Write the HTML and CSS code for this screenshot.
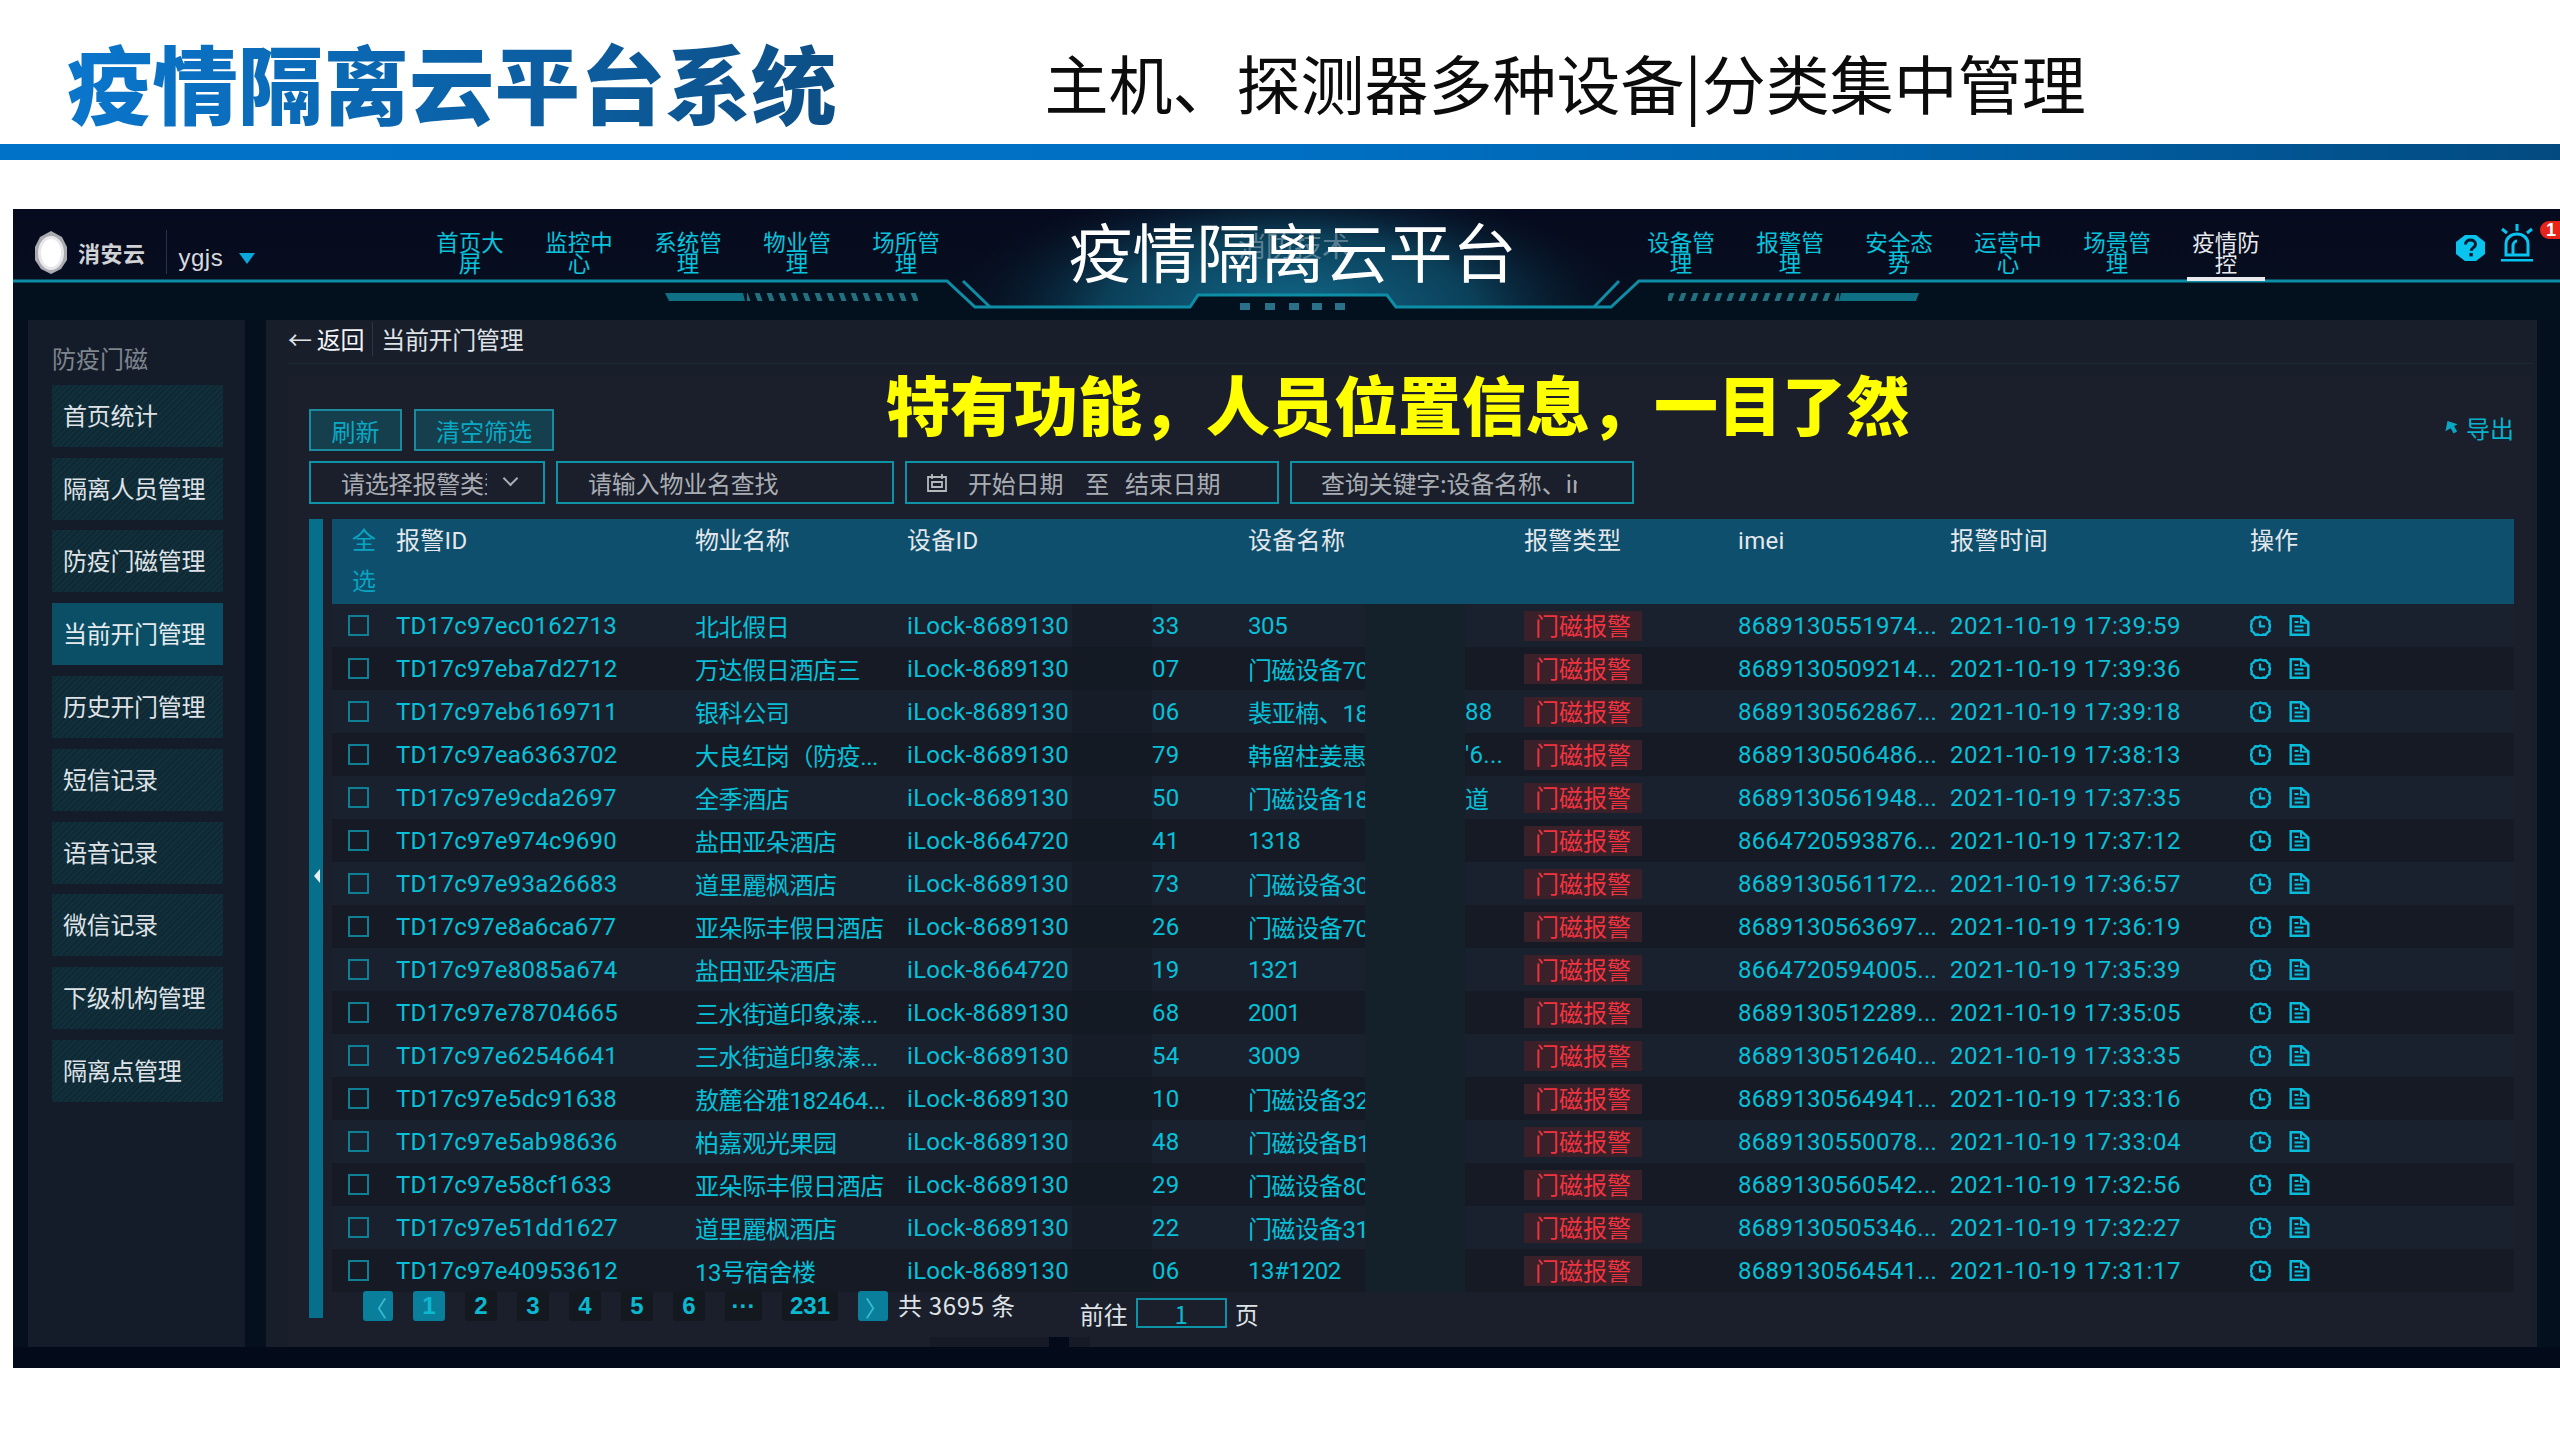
FILE: index.html
```html
<!DOCTYPE html>
<html lang="zh-CN">
<head>
<meta charset="utf-8">
<title>疫情隔离云平台系统</title>
<link rel="stylesheet" href="styles.css">
</head>
<body>
<svg class="sprite" width="0" height="0" aria-hidden="true">
  <symbol id="i-clock" viewBox="0 0 21 21">
    <path d="M10.5 1.5l2.6 1 2.6-.2 1.6 2.2 2.2 1.5-.2 2.7 1 2.3-1 2.4.2 2.6-2.2 1.5-1.6 2.2-2.6-.2-2.6 1-2.6-1-2.6.2-1.6-2.2-2.2-1.5.2-2.6-1-2.4 1-2.3-.2-2.7 2.2-1.5 1.6-2.2 2.6.2z" fill="none" stroke="currentColor" stroke-width="2.4"/>
    <path d="M10 5.5v5.8h5" fill="none" stroke="currentColor" stroke-width="2.2"/>
  </symbol>
  <symbol id="i-file" viewBox="0 0 20 21">
    <path d="M1.2 1.2h10.6l7 6.4v12.2H1.2z" fill="none" stroke="currentColor" stroke-width="2.4"/>
    <path d="M11.5 1.5v6.2h7M5 7h4M5 11.5h9M5 15.5h9" fill="none" stroke="currentColor" stroke-width="2"/>
  </symbol>
</svg>

<header class="slide-head">
  <h1 class="slide-title">疫情隔离云平台系统</h1>
  <p class="slide-sub">主机、探测器多种设备|分类集中管理</p>
</header>
<div class="slide-bar"></div>

<section class="app">
  <div class="app-head">
    <svg class="head-art" viewBox="13 209 2547 111" aria-hidden="true">
      <defs>
        <radialGradient id="glow" gradientUnits="userSpaceOnUse" cx="1290" cy="310" r="340" gradientTransform="translate(0 186) scale(1 .4)">
          <stop offset="0" stop-color="#11688a"/>
          <stop offset=".55" stop-color="#0b3f58"/>
          <stop offset="1" stop-color="#071326" stop-opacity="0"/>
        </radialGradient>
        <pattern id="slashL" width="12" height="8" patternUnits="userSpaceOnUse" patternTransform="skewX(20)">
          <rect width="5" height="8" fill="#23707f"/>
        </pattern>
        <pattern id="slashR" width="12" height="8" patternUnits="userSpaceOnUse" patternTransform="skewX(-20)">
          <rect width="5" height="8" fill="#23707f"/>
        </pattern>
      </defs>
      <polygon points="13,282 947,282 975,307 1190,307 1198,295 1387,295 1396,307 1611,307 1639,282 2560,282 2560,320 13,320" fill="#03111f"/>
      <polygon points="940,209 1640,209 1639,282 1611,307 1396,307 1387,295 1198,295 1190,307 975,307 947,282" fill="url(#glow)"/>
      <polyline points="13,281 947,281 975,307 1190,307 1198,295 1387,295 1396,307 1611,307 1639,281 2560,281" fill="none" stroke="#0e8ea6" stroke-width="3"/>
      <path d="M963 281l27 26M1619 281l-25 26" fill="none" stroke="#0e8ea6" stroke-width="3"/>
      <polygon points="665,293 743,293 745,301 669,301" fill="#0e6f85"/>
      <rect x="747" y="293" width="171" height="8" fill="url(#slashL)"/>
      <rect x="1668" y="293" width="171" height="8" fill="url(#slashR)"/>
      <polygon points="1841,293 1919,293 1916,301 1839,301" fill="#0e6f85"/>
      <g fill="#2a7088">
        <rect x="1240" y="303" width="10" height="7"/>
        <rect x="1265" y="303" width="10" height="7"/>
        <rect x="1289" y="303" width="10" height="7"/>
        <rect x="1312" y="303" width="10" height="7"/>
        <rect x="1335" y="303" width="10" height="7"/>
      </g>
    </svg>

    <div class="brand">
      <svg class="brand-logo" viewBox="0 0 34 44" aria-hidden="true">
        <polygon points="17,1 28,7 33,17 33,30 27,39 17,44 7,39 1,30 1,17 6,7" fill="#a9abb0"/>
        <ellipse cx="17" cy="23" rx="13" ry="17" fill="#e8e8ea"/>
        <ellipse cx="17" cy="23" rx="10" ry="14" fill="#ffffff"/>
      </svg>
      <span class="brand-name">消安云</span>
      <span class="brand-sep"></span>
      <span class="brand-user">ygjs</span>
      <span class="brand-caret"></span>
    </div>

    <nav class="nav">
      <a class="nav-item">首页大屏</a>
      <a class="nav-item">监控中心</a>
      <a class="nav-item">系统管理</a>
      <a class="nav-item">物业管理</a>
      <a class="nav-item">场所管理</a>
    </nav>

    <div class="app-title-wrap">
      <span class="ghost-title">消防技术</span>
      <div class="app-title">疫情隔离云平台</div>
    </div>

    <nav class="nav">
      <a class="nav-item">设备管理</a>
      <a class="nav-item">报警管理</a>
      <a class="nav-item">安全态势</a>
      <a class="nav-item">运营中心</a>
      <a class="nav-item">场景管理</a>
      <a class="nav-item nav-active">疫情防控</a>
    </nav>

    <div class="head-tools">
      <svg class="help" viewBox="0 0 29 26" aria-hidden="true">
        <polygon points="9,0 20,0 29,7 29,19 20,26 9,26 0,19 0,7" fill="#08c4ee"/>
        <path d="M9.5 9.5c0-3 2.300-4.500 5-4.500s5 1.600 5 4.200c0 3.400-4.200 3.400-4.200 6.600" fill="none" stroke="#06182c" stroke-width="3"/>
        <rect x="13.400" y="18" width="3.400" height="3.400" fill="#06182c"/>
      </svg>
      <svg class="bell" viewBox="0 0 32 38" aria-hidden="true">
        <path d="M16 0v7M1 5l5 4M31 5l-5 4" fill="none" stroke="#08c4ee" stroke-width="3"/>
        <path d="M5 31V20C5 14 10 10 16 10s11 4 11 10v11zM12 31V22c0-3 2-5 4-5" fill="none" stroke="#08c4ee" stroke-width="3"/>
        <rect x="0" y="35" width="32" height="2.500" fill="#08c4ee"/>
      </svg>
      <span class="badge">1</span>
    </div>
  </div>

  <div class="app-body">
    <aside class="side">
      <div class="side-title">防疫门磁</div>
      <a class="side-item">首页统计</a>
      <a class="side-item">隔离人员管理</a>
      <a class="side-item">防疫门磁管理</a>
      <a class="side-item side-active">当前开门管理</a>
      <a class="side-item">历史开门管理</a>
      <a class="side-item">短信记录</a>
      <a class="side-item">语音记录</a>
      <a class="side-item">微信记录</a>
      <a class="side-item">下级机构管理</a>
      <a class="side-item">隔离点管理</a>
    </aside>

    <main class="main">
      <div class="crumb">
        <span class="crumb-back">← <b>返回</b></span>
        <span class="crumb-sep"></span>
        <span class="crumb-cur">当前开门管理</span>
      </div>

      <div class="content">
        <div class="banner">特有功能，人员位置信息，一目了然</div>

        <div class="toolbar">
          <button class="btn btn-a">刷新</button>
          <button class="btn btn-b">清空筛选</button>
          <a class="export"><svg class="export-ico" viewBox="0 0 14 16" aria-hidden="true"><path d="M7 1l7 8H10v6H6V9H0z" fill="#0aa6c4"/></svg>导出</a>
        </div>

        <div class="filters">
          <div class="field f1"><span class="clip">请选择报警类型</span><i class="chev"></i></div>
          <div class="field f2">请输入物业名查找</div>
          <div class="field f3">
            <svg class="cal" viewBox="0 0 20 18" aria-hidden="true"><path d="M1 3h18v14H1zM5 0v5M15 0v5M5 8h10v5H5z" fill="none" stroke="#b4b8bd" stroke-width="1.800"/></svg>
            <span>开始日期</span><span class="to">至</span><span>结束日期</span>
          </div>
          <div class="field f4"><span class="clip">查询关键字:设备名称、imei</span></div>
        </div>

        <div class="table-wrap">
          <div class="strip"><i class="strip-arrow"></i></div>
          <div class="table">
            <div class="row row-h">
              <div class="th-check">全<br>选</div>
              <div>报警ID</div><div>物业名称</div><div>设备ID</div><div>设备名称</div><div>报警类型</div><div>imei</div><div>报警时间</div><div>操作</div>
            </div>

            <div class="row"><div class="cell-c"><i class="cb"></i></div><div>TD17c97ec0162713</div><div>北北假日</div><div class="dev"><span class="d1">iLock-8689130</span><span class="d2"></span><span>33</span></div><div class="name"><span class="n1">305</span><span class="n2"></span><span class="n3"></span></div><div><span class="tag">门磁报警</span></div><div>8689130551974...</div><div>2021-10-19 17:39:59</div><div class="ops"><svg class="op"><use href="#i-clock"/></svg><svg class="op"><use href="#i-file"/></svg></div></div>
            <div class="row"><div class="cell-c"><i class="cb"></i></div><div>TD17c97eba7d2712</div><div>万达假日酒店三</div><div class="dev"><span class="d1">iLock-8689130</span><span class="d2"></span><span>07</span></div><div class="name"><span class="n1">门磁设备70</span><span class="n2"></span><span class="n3"></span></div><div><span class="tag">门磁报警</span></div><div>8689130509214...</div><div>2021-10-19 17:39:36</div><div class="ops"><svg class="op"><use href="#i-clock"/></svg><svg class="op"><use href="#i-file"/></svg></div></div>
            <div class="row"><div class="cell-c"><i class="cb"></i></div><div>TD17c97eb6169711</div><div>银科公司</div><div class="dev"><span class="d1">iLock-8689130</span><span class="d2"></span><span>06</span></div><div class="name"><span class="n1">裴亚楠、18</span><span class="n2"></span><span class="n3">88</span></div><div><span class="tag">门磁报警</span></div><div>8689130562867...</div><div>2021-10-19 17:39:18</div><div class="ops"><svg class="op"><use href="#i-clock"/></svg><svg class="op"><use href="#i-file"/></svg></div></div>
            <div class="row"><div class="cell-c"><i class="cb"></i></div><div>TD17c97ea6363702</div><div>大良红岗（防疫...</div><div class="dev"><span class="d1">iLock-8689130</span><span class="d2"></span><span>79</span></div><div class="name"><span class="n1">韩留柱姜惠</span><span class="n2"></span><span class="n3">'6...</span></div><div><span class="tag">门磁报警</span></div><div>8689130506486...</div><div>2021-10-19 17:38:13</div><div class="ops"><svg class="op"><use href="#i-clock"/></svg><svg class="op"><use href="#i-file"/></svg></div></div>
            <div class="row"><div class="cell-c"><i class="cb"></i></div><div>TD17c97e9cda2697</div><div>全季酒店</div><div class="dev"><span class="d1">iLock-8689130</span><span class="d2"></span><span>50</span></div><div class="name"><span class="n1">门磁设备18</span><span class="n2"></span><span class="n3">道</span></div><div><span class="tag">门磁报警</span></div><div>8689130561948...</div><div>2021-10-19 17:37:35</div><div class="ops"><svg class="op"><use href="#i-clock"/></svg><svg class="op"><use href="#i-file"/></svg></div></div>
            <div class="row"><div class="cell-c"><i class="cb"></i></div><div>TD17c97e974c9690</div><div>盐田亚朵酒店</div><div class="dev"><span class="d1">iLock-8664720</span><span class="d2"></span><span>41</span></div><div class="name"><span class="n1">1318</span><span class="n2"></span><span class="n3"></span></div><div><span class="tag">门磁报警</span></div><div>8664720593876...</div><div>2021-10-19 17:37:12</div><div class="ops"><svg class="op"><use href="#i-clock"/></svg><svg class="op"><use href="#i-file"/></svg></div></div>
            <div class="row"><div class="cell-c"><i class="cb"></i></div><div>TD17c97e93a26683</div><div>道里麗枫酒店</div><div class="dev"><span class="d1">iLock-8689130</span><span class="d2"></span><span>73</span></div><div class="name"><span class="n1">门磁设备30</span><span class="n2"></span><span class="n3"></span></div><div><span class="tag">门磁报警</span></div><div>8689130561172...</div><div>2021-10-19 17:36:57</div><div class="ops"><svg class="op"><use href="#i-clock"/></svg><svg class="op"><use href="#i-file"/></svg></div></div>
            <div class="row"><div class="cell-c"><i class="cb"></i></div><div>TD17c97e8a6ca677</div><div>亚朵际丰假日酒店</div><div class="dev"><span class="d1">iLock-8689130</span><span class="d2"></span><span>26</span></div><div class="name"><span class="n1">门磁设备70</span><span class="n2"></span><span class="n3"></span></div><div><span class="tag">门磁报警</span></div><div>8689130563697...</div><div>2021-10-19 17:36:19</div><div class="ops"><svg class="op"><use href="#i-clock"/></svg><svg class="op"><use href="#i-file"/></svg></div></div>
            <div class="row"><div class="cell-c"><i class="cb"></i></div><div>TD17c97e8085a674</div><div>盐田亚朵酒店</div><div class="dev"><span class="d1">iLock-8664720</span><span class="d2"></span><span>19</span></div><div class="name"><span class="n1">1321</span><span class="n2"></span><span class="n3"></span></div><div><span class="tag">门磁报警</span></div><div>8664720594005...</div><div>2021-10-19 17:35:39</div><div class="ops"><svg class="op"><use href="#i-clock"/></svg><svg class="op"><use href="#i-file"/></svg></div></div>
            <div class="row"><div class="cell-c"><i class="cb"></i></div><div>TD17c97e78704665</div><div>三水街道印象溱...</div><div class="dev"><span class="d1">iLock-8689130</span><span class="d2"></span><span>68</span></div><div class="name"><span class="n1">2001</span><span class="n2"></span><span class="n3"></span></div><div><span class="tag">门磁报警</span></div><div>8689130512289...</div><div>2021-10-19 17:35:05</div><div class="ops"><svg class="op"><use href="#i-clock"/></svg><svg class="op"><use href="#i-file"/></svg></div></div>
            <div class="row"><div class="cell-c"><i class="cb"></i></div><div>TD17c97e62546641</div><div>三水街道印象溱...</div><div class="dev"><span class="d1">iLock-8689130</span><span class="d2"></span><span>54</span></div><div class="name"><span class="n1">3009</span><span class="n2"></span><span class="n3"></span></div><div><span class="tag">门磁报警</span></div><div>8689130512640...</div><div>2021-10-19 17:33:35</div><div class="ops"><svg class="op"><use href="#i-clock"/></svg><svg class="op"><use href="#i-file"/></svg></div></div>
            <div class="row"><div class="cell-c"><i class="cb"></i></div><div>TD17c97e5dc91638</div><div>敖麓谷雅182464...</div><div class="dev"><span class="d1">iLock-8689130</span><span class="d2"></span><span>10</span></div><div class="name"><span class="n1">门磁设备32</span><span class="n2"></span><span class="n3"></span></div><div><span class="tag">门磁报警</span></div><div>8689130564941...</div><div>2021-10-19 17:33:16</div><div class="ops"><svg class="op"><use href="#i-clock"/></svg><svg class="op"><use href="#i-file"/></svg></div></div>
            <div class="row"><div class="cell-c"><i class="cb"></i></div><div>TD17c97e5ab98636</div><div>柏嘉观光果园</div><div class="dev"><span class="d1">iLock-8689130</span><span class="d2"></span><span>48</span></div><div class="name"><span class="n1">门磁设备B1</span><span class="n2"></span><span class="n3"></span></div><div><span class="tag">门磁报警</span></div><div>8689130550078...</div><div>2021-10-19 17:33:04</div><div class="ops"><svg class="op"><use href="#i-clock"/></svg><svg class="op"><use href="#i-file"/></svg></div></div>
            <div class="row"><div class="cell-c"><i class="cb"></i></div><div>TD17c97e58cf1633</div><div>亚朵际丰假日酒店</div><div class="dev"><span class="d1">iLock-8689130</span><span class="d2"></span><span>29</span></div><div class="name"><span class="n1">门磁设备80</span><span class="n2"></span><span class="n3"></span></div><div><span class="tag">门磁报警</span></div><div>8689130560542...</div><div>2021-10-19 17:32:56</div><div class="ops"><svg class="op"><use href="#i-clock"/></svg><svg class="op"><use href="#i-file"/></svg></div></div>
            <div class="row"><div class="cell-c"><i class="cb"></i></div><div>TD17c97e51dd1627</div><div>道里麗枫酒店</div><div class="dev"><span class="d1">iLock-8689130</span><span class="d2"></span><span>22</span></div><div class="name"><span class="n1">门磁设备31</span><span class="n2"></span><span class="n3"></span></div><div><span class="tag">门磁报警</span></div><div>8689130505346...</div><div>2021-10-19 17:32:27</div><div class="ops"><svg class="op"><use href="#i-clock"/></svg><svg class="op"><use href="#i-file"/></svg></div></div>
            <div class="row"><div class="cell-c"><i class="cb"></i></div><div>TD17c97e40953612</div><div>13号宿舍楼</div><div class="dev"><span class="d1">iLock-8689130</span><span class="d2"></span><span>06</span></div><div class="name"><span class="n1">13#1202</span><span class="n2"></span><span class="n3"></span></div><div><span class="tag">门磁报警</span></div><div>8689130564541...</div><div>2021-10-19 17:31:17</div><div class="ops"><svg class="op"><use href="#i-clock"/></svg><svg class="op"><use href="#i-file"/></svg></div></div>

            <div class="pager">
              <span class="pg pg-on pg-arrow">〈</span>
              <span class="pg pg-on">1</span>
              <span class="pg">2</span>
              <span class="pg">3</span>
              <span class="pg">4</span>
              <span class="pg">5</span>
              <span class="pg">6</span>
              <span class="pg pg-more">···</span>
              <span class="pg pg-wide">231</span>
              <span class="pg pg-on pg-arrow pg-next">〉</span>
              <span class="pg-total">共 3695 条</span>
              <span class="pg-goto">前往</span>
              <span class="pg-input">1</span>
              <span class="pg-unit">页</span>
            </div>
          </div>
        </div>
      </div>
    </main>
  </div>
</section>
</body>
</html>
```

FILE: styles.css
```css
* { box-sizing: border-box; }
html, body { margin: 0; padding: 0; background: #fff; }
body {
  width: 2560px;
  height: 1440px;
  overflow: hidden;
  font-family: "Noto Sans CJK SC", "Liberation Sans", sans-serif;
}
.sprite { position: absolute; }

/* slide heading */
.slide-head {
  height: 144px;
  display: flex;
  align-items: flex-start;
  padding-left: 67px;
}
.slide-title {
  margin: 27px 0 0;
  font-size: 85.500px;
  line-height: 108px;
  font-weight: 900;
  white-space: nowrap;
  background: linear-gradient(90deg, #0a76cc, #0d4f86);
  -webkit-background-clip: text;
  background-clip: text;
  color: transparent;
}
.slide-sub {
  margin: 33px 0 0 208px;
  font-size: 64px;
  line-height: 96px;
  color: #0c0c0c;
  white-space: nowrap;
}
.slide-bar {
  height: 16px;
  background: linear-gradient(90deg, #0072c8 0%, #0070c4 50%, #0062aa 75%, #034a80 100%);
}

/* app frame */
.app {
  margin: 49px 0 0 13px;
  height: 1159px;
  background: #030b1b;
  display: flex;
  flex-direction: column;
}
.app-head {
  position: relative;
  height: 111px;
  flex: none;
  display: flex;
  align-items: flex-start;
  background: linear-gradient(#060a1e, #07101f);
}
.head-art { position: absolute; left: 0; top: 0; width: 2547px; height: 111px; }
.brand {
  position: relative;
  width: 423px;
  flex: none;
  display: flex;
  align-items: center;
  height: 60px;
  padding-left: 21px;
  margin-top: 13px;
}
.brand-logo { width: 34px; height: 44px; flex: none; }
.brand-name { margin-left: 10px; font-size: 22px; font-weight: 700; color: #d0d2d6; letter-spacing: .5px; }
.brand-sep { width: 1px; height: 44px; margin-left: 20px; background: #2a3346; }
.brand-user { margin-left: 12px; font: 24px "Liberation Sans", sans-serif; color: #d8dade; position: relative; top: 6px; letter-spacing: .5px; }
.brand-caret {
  margin-left: 16px;
  margin-top: 12px;
  border-left: 8px solid transparent;
  border-right: 8px solid transparent;
  border-top: 11px solid #0aa6dc;
}
.nav { position: relative; display: flex; gap: 43px; padding-top: 22px; flex: none; }
.nav-item {
  position: relative;
  width: 68px;
  margin-right: -2px;
  font-size: 22.500px;
  line-height: 21px;
  text-align: center;
  color: #08c3dc;
}
.nav-active { color: #e8eaee; }
.nav-active::after {
  content: "";
  position: absolute;
  left: -5px;
  right: -5px;
  top: 46px;
  height: 4px;
  background: #e8eaee;
}
.app-title-wrap { position: relative; width: 709px; flex: none; text-align: center; }
.app-title { position: relative; font-size: 64px; line-height: 80px; color: #fff; }
.ghost-title {
  position: absolute;
  left: 300px;
  top: 18px;
  font-size: 28px;
  line-height: 36px;
  color: rgba(255, 255, 255, .32);
}
.head-tools { position: relative; flex: 1; }
.help { position: absolute; left: 198px; top: 26px; width: 29px; height: 26px; }
.bell { position: absolute; left: 243px; top: 15px; width: 32px; height: 38px; }
.badge {
  position: absolute;
  left: 282px;
  top: 12px;
  width: 24px;
  height: 18px;
  padding-left: 6px;
  border-radius: 9px 0 0 9px;
  background: #e8231a;
  color: #fff;
  font: 700 18px/18px "Liberation Sans", sans-serif;
}

/* body */
.app-body {
  height: 1027px;
  flex: none;
  display: flex;
  padding: 0 10px 0 15px;
  gap: 21px;
  background: #04101e;
}
.side {
  width: 217px;
  flex: none;
  background: #141c2a;
  padding: 0 22px 0 24px;
  display: flex;
  flex-direction: column;
  gap: 10.800px;
}
.side-title {
  height: 54px;
  padding-top: 23px;
  font-size: 24px;
  line-height: 30px;
  color: #7f858d;
}
.side-item {
  height: 62px;
  flex: none;
  padding-left: 11px;
  font-size: 24px;
  letter-spacing: -.3px;
  line-height: 60px;
  color: #dfe2e6;
  background: repeating-linear-gradient(135deg, #10303c 0 2px, #0f2833 2px 4px);
}
.side-active { background: #0b4f66; color: #e6eaee; }
.main {
  width: 2271px;
  flex: none;
  background: #181e2a;
  padding: 0 4px 0 22px;
  display: flex;
  flex-direction: column;
}
.crumb {
  height: 44px;
  flex: none;
  display: flex;
  align-items: center;
  padding-bottom: 6px;
  border-bottom: 1px solid #1d2a38;
  font-size: 24px;
  letter-spacing: -.3px;
  color: #dfe2e6;
}
.crumb-back b { font-weight: 400; color: #f4f5f6; }
.crumb-sep { width: 1px; height: 34px; margin: 0 8px; background: #2c3644; }
.content {
  position: relative;
  flex: 1;
  margin-top: 12px;
  padding: 33px 21px 0;
  background: #1a1f2b;
}
.content::after {
  content: "";
  position: absolute;
  left: 642px;
  bottom: 0;
  width: 160px;
  height: 10px;
  background: linear-gradient(90deg, #161a26 0 119px, #030b1b 119px 139px, #161a26 139px);
}
.banner {
  position: absolute;
  left: 598px;
  top: -24px;
  font-size: 64px;
  line-height: 100px;
  font-weight: 900;
  color: #ffff00;
  white-space: nowrap;
}
.toolbar { display: flex; gap: 12px; height: 42px; align-items: stretch; }
.btn {
  padding: 0;
  font: 24px "Noto Sans CJK SC", sans-serif;
  color: #09a9c4;
  background: #163f4e;
  border: 2px solid #1a8a9e;
}
.btn-a { width: 93px; }
.btn-b { width: 140px; }
.export {
  margin-left: auto;
  margin-right: -2px;
  padding-bottom: 6px;
  display: flex;
  align-items: center;
  gap: 8px;
  font-size: 24px;
  color: #0ab0cc;
}
.export-ico { width: 14px; height: 16px; transform: rotate(-30deg); }
.filters { display: flex; gap: 11px; height: 43px; margin-top: 10px; }
.field {
  display: flex;
  align-items: center;
  flex: none;
  border: 2px solid #0c93a8;
  font-size: 24px;
  letter-spacing: -.2px;
  color: #a9adb3;
  white-space: nowrap;
  overflow: hidden;
}
.f1 { width: 236px; padding-left: 30px; }
.f2 { width: 338px; padding-left: 30px; }
.f3 { width: 374px; padding-left: 20px; }
.f4 { width: 344px; padding-left: 29px; }
.clip { display: block; overflow: hidden; }
.f1 .clip { width: 146px; }
.f4 .clip { width: 256px; }
.chev {
  width: 11px;
  height: 11px;
  margin: -8px 0 0 18px;
  border-right: 2px solid #a9adb3;
  border-bottom: 2px solid #a9adb3;
  transform: rotate(45deg);
}
.cal { width: 20px; height: 18px; margin-right: 21px; }
.to { margin: 0 16px 0 22px; }

/* table */
.table-wrap { display: flex; gap: 9px; margin-top: 15px; align-items: flex-start; }
.strip { position: relative; width: 14px; height: 799px; flex: none; background: #06708c; }
.strip-arrow {
  position: absolute;
  left: 5px;
  top: 350px;
  border-top: 7px solid transparent;
  border-bottom: 7px solid transparent;
  border-right: 6px solid #e8eef2;
}
.table { width: 2182px; flex: none; }
.row {
  display: grid;
  grid-template-columns: 64px 299px 212px 341px 276px 214px 212px 300px 264px;
  align-items: center;
  height: 43px;
  font-family: "Roboto", "Noto Sans CJK SC", sans-serif;
  font-size: 24px;
  font-weight: 400;
  letter-spacing: .3px;
  color: #08c0d8;
  background: #1a212e;
  white-space: nowrap;
}
.row:nth-child(odd) { background: #151a24; }
.row > div:nth-child(3), .row .n1 { letter-spacing: -.4px; }
.row > div:nth-child(8) { letter-spacing: .6px; }
.row-h {
  height: 85px;
  align-items: start;
  background: #0e4f6d;
  color: #e4e8ec;
  line-height: 41px;
}
.row-h:nth-child(odd) { background: #0e4f6d; }
.row-h > div { padding-top: 2px; }
.th-check { padding-left: 20px; color: #08a4c0; }
.cell-c { display: flex; align-items: center; padding-left: 16px; }
.cb { width: 21px; height: 21px; border: 2px solid #0e7f94; }
.dev, .name { display: flex; align-items: center; height: 100%; }
.d1 { width: 165px; flex: none; }
.d2 { width: 80px; height: 100%; flex: none; background: rgba(20, 26, 37, .6); }
.n1 { width: 117px; flex: none; overflow: hidden; }
.n2 { width: 100px; height: 100%; flex: none; background: #14202a; }
.tag {
  display: inline-block;
  width: 118px;
  height: 30px;
  line-height: 28px;
  text-align: center;
  background: #3a2029;
  color: #f0333f;
  font-family: "Noto Sans CJK SC", sans-serif;
  font-weight: 400;
  letter-spacing: 0;
  vertical-align: middle;
}
.ops { display: flex; align-items: center; gap: 18px; color: #08bcdc; }
.op { width: 21px; height: 21px; display: block; }

/* pager */
.pager {
  display: flex;
  align-items: flex-start;
  gap: 20px;
  padding-left: 31px;
  height: 36px;
  margin-top: -1px;
  font-size: 24px;
  color: #0ab8d0;
}
.pg {
  width: 32px;
  height: 30px;
  line-height: 30px;
  text-align: center;
  background: #14181f;
  border-radius: 3px;
  font-weight: 700;
  font-family: "Liberation Sans", sans-serif;
}
.pg-on { background: #0a7f9c; }
.pg-arrow { width: 30px; font-weight: 400; color: #3cc0d8; font-family: "Noto Sans CJK SC", sans-serif; font-size: 22px; text-indent: -4px; }
.pg-next { text-indent: 6px; }
.pg-more { width: 37px; }
.pg-wide { width: 56px; }
.pg-total { margin-left: -10px; color: #dfe2e6; line-height: 28px; white-space: nowrap; letter-spacing: .7px; }
.pg-goto { margin-left: 44px; margin-top: 9px; color: #dfe2e6; line-height: 28px; }
.pg-input {
  margin-left: -12px;
  margin-top: 7px;
  width: 91px;
  height: 30px;
  line-height: 28px;
  text-align: center;
  border: 2px solid #0c93a8;
}
.pg-unit { margin-left: -12px; margin-top: 9px; color: #dfe2e6; line-height: 28px; }
```
